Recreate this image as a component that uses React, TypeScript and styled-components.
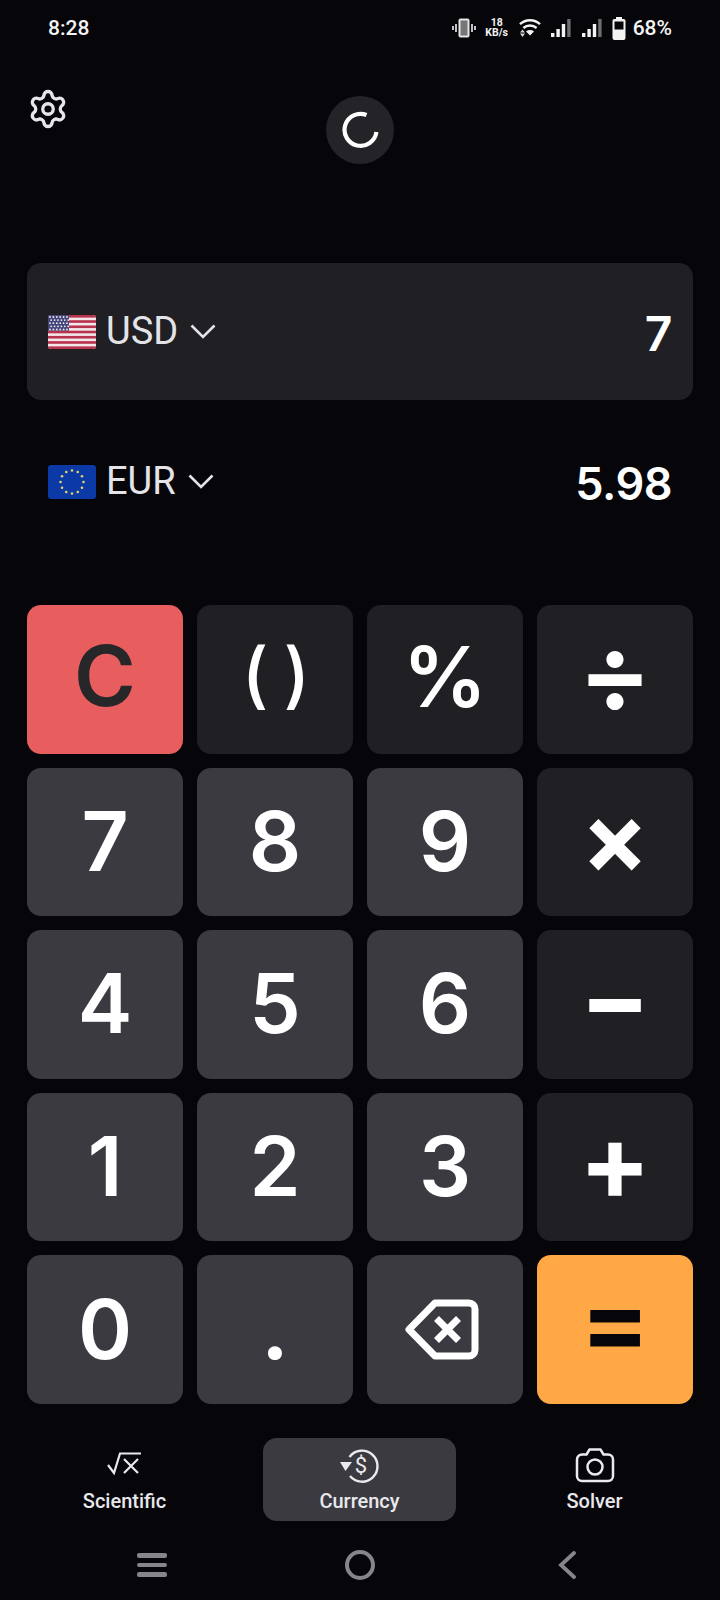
import React from "react";
import styled, { createGlobalStyle } from "styled-components";
import { Settings } from "lucide-react";

const GlobalStyle = createGlobalStyle`
  html, body {
    margin: 0;
    padding: 0;
    background: #05050a;
  }
  * {
    box-sizing: border-box;
  }
`;

const Screen = styled.div`
  width: 720px;
  height: 1600px;
  background: #05050a;
  color: #fff;
  font-family: Inter, "Noto Sans", sans-serif;
  display: flex;
  flex-direction: column;
  overflow: hidden;
`;

const StatusBar = styled.div`
  height: 56px;
  padding: 0 48px;
  display: flex;
  align-items: center;
  justify-content: space-between;
  font-family: Roboto, sans-serif;
  font-weight: 500;
  font-size: 21px;
  color: #f4f4f4;
`;

const StatusIcons = styled.div`
  display: flex;
  align-items: center;
`;

const Speed = styled.div`
  width: 26px;
  margin: 0 9px 0 8px;
  text-align: center;
  font-size: 10.5px;
  font-weight: 700;
  line-height: 10.5px;
`;

const Percent = styled.span`
  margin-left: 7px;
`;

const Header = styled.div`
  height: 207px;
  padding: 0 27px;
  display: grid;
  grid-template-columns: 1fr 68px 1fr;
`;

const GearButton = styled.div`
  margin-top: 32px;
  color: #e6e6ea;
  height: 42px;
`;

const SpinnerButton = styled.div`
  margin-top: 40px;
  width: 68px;
  height: 68px;
  border-radius: 50%;
  background: #232328;
  display: flex;
  align-items: center;
  justify-content: center;
`;

const SourceCard = styled.div`
  height: 137px;
  margin: 0 27px;
  padding: 0 21px;
  border-radius: 14px;
  background: #1f1f24;
  display: flex;
  align-items: center;
  justify-content: space-between;
`;

const TargetRow = styled.div`
  height: 137px;
  margin: 13px 27px 55px;
  padding: 0 21px;
  display: flex;
  align-items: center;
  justify-content: space-between;
`;

const CurrencyPick = styled.div`
  display: flex;
  align-items: center;
  color: #e4e4e8;
  font-family: Roboto, sans-serif;
  font-size: 38px;
  line-height: 44px;
`;

const Code = styled.span`
  margin-left: 10px;
  margin-right: 12px;
  padding-bottom: 2px;
`;

const Amount = styled.div<{ $size: number }>`
  margin-top: 4px;
  font-size: ${(p) => p.$size}px;
  font-weight: 600;
  letter-spacing: -0.5px;
  color: #fff;
`;

const Keypad = styled.div`
  margin: 0 27px;
  display: grid;
  grid-template-columns: repeat(4, 156px);
  grid-auto-rows: 148.6px;
  gap: 14px;
`;

type KeyKind = "digit" | "op" | "clear" | "equals";

const keyBg: Record<KeyKind, string> = {
  digit: "#3a3a40",
  op: "#1f1f24",
  clear: "#e85d5d",
  equals: "#ffa845",
};

const keyFg: Record<KeyKind, string> = {
  digit: "#fff",
  op: "#fff",
  clear: "#27272a",
  equals: "#05050a",
};

const Key = styled.div<{ $kind: KeyKind; $size?: number; $weight?: number; $lift?: number }>`
  border-radius: 14px;
  background: ${(p) => keyBg[p.$kind]};
  color: ${(p) => keyFg[p.$kind]};
  font-size: ${(p) => p.$size ?? 82}px;
  font-weight: ${(p) => p.$weight ?? 600};
  padding-bottom: ${(p) => (p.$lift ?? 0) * 2}px;
  display: flex;
  align-items: center;
  justify-content: center;
  line-height: 1;
`;

const Parens = styled.span`
  letter-spacing: -2px;
`;

const Tabs = styled.div`
  margin-top: 34px;
  padding: 0 28px;
  display: grid;
  grid-template-columns: repeat(3, 193px);
  column-gap: 42px;
  height: 83px;
`;

const Tab = styled.div<{ $active?: boolean }>`
  border-radius: 14px;
  background: ${(p) => (p.$active ? "#3a3a40" : "transparent")};
  color: #e8e8ec;
  display: flex;
  flex-direction: column;
  align-items: center;
  padding-top: 9px;
`;

const TabIcon = styled.div`
  height: 40px;
  display: flex;
  justify-content: center;
  align-items: flex-start;
`;

const TabLabel = styled.div`
  margin-top: 1px;
  font-family: Roboto, sans-serif;
  font-size: 20px;
  font-weight: 500;
  line-height: 26px;
`;

const NavBar = styled.div`
  margin-top: 25px;
  padding-left: 137px;
  display: grid;
  grid-template-columns: repeat(3, 30px);
  column-gap: 178px;
  align-items: center;
  height: 38px;
  color: #85858a;
`;

const Bars = styled.div`
  display: flex;
  flex-direction: column;
  gap: 5px;
`;

const Bar = styled.div`
  height: 4.5px;
  border-radius: 2px;
  background: currentColor;
`;

const Ring = styled.div`
  width: 30px;
  height: 30px;
  border: 4px solid currentColor;
  border-radius: 50%;
`;

const BackSlot = styled.div`
  padding-left: 5px;
  display: flex;
`;

const Vibrate = () => (
  <svg width="24" height="20" viewBox="0 0 24 20" fill="none">
    <rect x="7.5" y="1.5" width="9" height="17" rx="1" stroke="#e6e6e6" strokeWidth="2" fill="#777" />
    <path d="M4 6v8M1 8v4M20 6v8M23 8v4" stroke="#d8d8d8" strokeWidth="1.8" />
  </svg>
);

const Wifi = () => (
  <svg width="22" height="20" viewBox="0 0 22 20" fill="none" style={{ marginRight: 10 }}>
    <path d="M1 6.2C6.6 .9 15.4 .9 21 6.2" stroke="#f4f4f4" strokeWidth="2.4" />
    <path d="M4.4 10C8.2 6.6 13.8 6.6 17.6 10" stroke="#f4f4f4" strokeWidth="2.4" />
    <path d="M7 13.4C9.4 11.6 12.6 11.6 15 13.4L11 17.5Z" fill="#f4f4f4" />
    <path d="M3.5 11.5l-2.5 3h5zM1 15.5l2.5 3.5 2.5-3.5z" fill="#d8d8d8" />
  </svg>
);

const Signal = ({ gap }: { gap: number }) => (
  <svg width="20" height="18" viewBox="0 0 20 18" style={{ marginRight: gap }}>
    <rect x="0" y="14" width="3.4" height="4" fill="#f4f4f4" />
    <rect x="5.4" y="10" width="3.4" height="8" fill="#f4f4f4" />
    <rect x="10.8" y="5" width="3.4" height="13" fill="#f4f4f4" />
    <rect x="16.2" y="0" width="3.4" height="18" fill="#6e6e70" />
  </svg>
);

const Battery = () => (
  <svg width="14" height="23" viewBox="0 0 14 23">
    <rect x="4" y="0" width="6" height="3" fill="#f4f4f4" />
    <rect x="0.5" y="2" width="13" height="21" rx="2" fill="#f4f4f4" />
    <rect x="2.5" y="4.5" width="9" height="8" fill="#05050a" />
  </svg>
);

const Spinner = () => (
  <svg width="38" height="38" viewBox="0 0 38 38" fill="none">
    <path d="M25.5 4A16 16 0 1 0 35.4 21" stroke="#fff" strokeWidth="4.2" />
  </svg>
);

const Chevron = () => (
  <svg width="26" height="17" viewBox="0 0 26 17" fill="none">
    <path d="M1.5 2.5L13 14L24.5 2.5" stroke="#e4e4e8" strokeWidth="2.6" />
  </svg>
);

const UsFlag = () => {
  const stripes = Array.from({ length: 7 }, (_, i) => i * 2);
  const stars: [number, number][] = [];
  for (let r = 0; r < 5; r++) {
    for (let c = 0; c < 6; c++) {
      stars.push([2 + c * 3.4 + (r % 2) * 1.2, 2 + r * 3.1]);
    }
  }
  return (
    <svg width="48" height="34" viewBox="0 0 48 34">
      <defs>
        <clipPath id="us-clip">
          <rect width="48" height="34" rx="3" />
        </clipPath>
      </defs>
      <g clipPath="url(#us-clip)">
        <rect width="48" height="34" fill="#f2e6ea" />
        {stripes.map((s) => (
          <rect key={s} y={(s * 34) / 13} width="48" height={34 / 13} fill="#b8324c" />
        ))}
        <rect width="21" height="15.7" fill="#45457a" />
        {stars.map(([x, y]) => (
          <circle key={`${x}-${y}`} cx={x} cy={y} r="0.9" fill="#eeeef6" />
        ))}
      </g>
    </svg>
  );
};

const EuFlag = () => {
  const stars = Array.from({ length: 12 }, (_, i) => {
    const a = (i * Math.PI) / 6;
    return [24 + 11.5 * Math.sin(a), 17 - 11.5 * Math.cos(a)];
  });
  return (
    <svg width="48" height="34" viewBox="0 0 48 34">
      <rect width="48" height="34" rx="3" fill="#0b3aa6" />
      {stars.map(([x, y]) => (
        <circle key={`${x}-${y}`} cx={x} cy={y} r="1.3" fill="#e0d56a" />
      ))}
    </svg>
  );
};

const Backspace = () => (
  <svg width="74" height="61" viewBox="0 0 74 61" fill="none" style={{ marginRight: 7 }}>
    <path
      d="M30 4H64a6 6 0 0 1 6 6V51a6 6 0 0 1-6 6H30L4 30.5Z"
      stroke="#fff"
      strokeWidth="7"
      strokeLinejoin="round"
    />
    <path d="M31.5 19.5L53.5 41.5M53.5 19.5L31.5 41.5" stroke="#fff" strokeWidth="7" />
  </svg>
);

const RootX = () => (
  <svg width="36" height="24" viewBox="0 0 36 24" fill="none" stroke="#eaeaee" strokeWidth="2.2" style={{ marginTop: 4 }}>
    <path d="M1 14L7 22L13 2.5H34" />
    <path d="M17 8L31 22M31 8L17 22" />
  </svg>
);

const CurrencyCycle = () => (
  <svg width="40" height="38" viewBox="0 0 40 38" fill="none" stroke="#eaeaee" strokeWidth="2.4">
    <path d="M9.5 10A15.5 15.5 0 1 1 10 29" />
    <path d="M0 15H12L5.5 24Z" fill="#eaeaee" stroke="none" />
    <text x="21" y="26" fontFamily="Roboto, sans-serif" fontSize="22" fill="#eaeaee" stroke="none" textAnchor="middle">
      $
    </text>
  </svg>
);

const CameraIcon = () => (
  <svg width="40" height="36" viewBox="0 0 40 36" fill="none" stroke="#eaeaee" strokeWidth="2.5" strokeLinejoin="round">
    <path d="M7 7.5H11.5L14.5 2.5H25.5L28.5 7.5H33a5 5 0 0 1 5 5V29a5 5 0 0 1-5 5H7a5 5 0 0 1-5-5V12.5a5 5 0 0 1 5-5Z" />
    <circle cx="20" cy="20" r="7.5" />
  </svg>
);

const BackIcon = () => (
  <svg width="18" height="28" viewBox="0 0 18 28" fill="none">
    <path d="M16 2L3 14L16 26" stroke="#85858a" strokeWidth="3.8" strokeLinecap="round" />
  </svg>
);

const keys: { label: React.ReactNode; kind: KeyKind; size?: number; weight?: number; lift?: number }[] = [
  { label: "C", kind: "clear", size: 84, lift: 3 },
  { label: <Parens>( )</Parens>, kind: "op", size: 72, weight: 500, lift: 5 },
  { label: "%", kind: "op", size: 84, lift: 2 },
  { label: "÷", kind: "op", size: 110, weight: 600, lift: 7 },
  { label: "7", kind: "digit" },
  { label: "8", kind: "digit" },
  { label: "9", kind: "digit" },
  { label: "×", kind: "op", size: 100, weight: 650, lift: 4 },
  { label: "4", kind: "digit" },
  { label: "5", kind: "digit" },
  { label: "6", kind: "digit" },
  { label: "−", kind: "op", size: 104, weight: 700, lift: 6 },
  { label: "1", kind: "digit" },
  { label: "2", kind: "digit" },
  { label: "3", kind: "digit" },
  { label: "+", kind: "op", size: 106, weight: 700, lift: 5 },
  { label: "0", kind: "digit" },
  { label: ".", kind: "digit", weight: 700 },
  { label: <Backspace />, kind: "digit" },
  { label: "=", kind: "equals", size: 102, weight: 700, lift: 9 },
];

const App = () => {
  return (
    <Screen>
      <GlobalStyle />
      <StatusBar>
        <span>8:28</span>
        <StatusIcons>
          <Vibrate />
          <Speed>
            18
            <br />
            KB/s
          </Speed>
          <Wifi />
          <Signal gap={11} />
          <Signal gap={10} />
          <Battery />
          <Percent>68%</Percent>
        </StatusIcons>
      </StatusBar>

      <Header>
        <GearButton>
          <Settings size={42} strokeWidth={1.9} />
        </GearButton>
        <SpinnerButton>
          <Spinner />
        </SpinnerButton>
      </Header>

      <SourceCard>
        <CurrencyPick>
          <UsFlag />
          <Code>USD</Code>
          <Chevron />
        </CurrencyPick>
        <Amount $size={48}>7</Amount>
      </SourceCard>

      <TargetRow>
        <CurrencyPick>
          <EuFlag />
          <Code>EUR</Code>
          <Chevron />
        </CurrencyPick>
        <Amount $size={45}>5.98</Amount>
      </TargetRow>

      <Keypad>
        {keys.map((k, i) => (
          <Key key={i} $kind={k.kind} $size={k.size} $weight={k.weight} $lift={k.lift}>
            {k.label}
          </Key>
        ))}
      </Keypad>

      <Tabs>
        <Tab>
          <TabIcon>
            <RootX />
          </TabIcon>
          <TabLabel>Scientific</TabLabel>
        </Tab>
        <Tab $active>
          <TabIcon>
            <CurrencyCycle />
          </TabIcon>
          <TabLabel>Currency</TabLabel>
        </Tab>
        <Tab>
          <TabIcon>
            <CameraIcon />
          </TabIcon>
          <TabLabel>Solver</TabLabel>
        </Tab>
      </Tabs>

      <NavBar>
        <Bars>
          <Bar />
          <Bar />
          <Bar />
        </Bars>
        <Ring />
        <BackSlot>
          <BackIcon />
        </BackSlot>
      </NavBar>
    </Screen>
  );
};

export default App;
